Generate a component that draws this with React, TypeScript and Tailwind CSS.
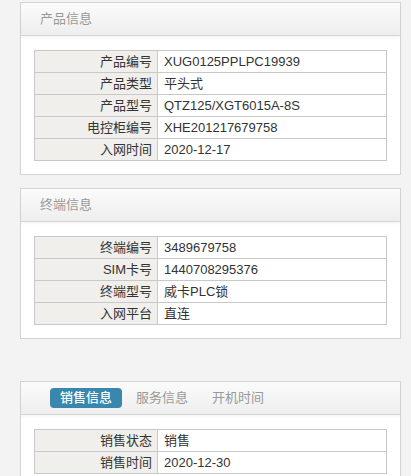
import React from 'react';

type Row = [string, string];

const productRows: Row[] = [
  ['产品编号', 'XUG0125PPLPC19939'],
  ['产品类型', '平头式'],
  ['产品型号', 'QTZ125/XGT6015A-8S'],
  ['电控柜编号', 'XHE201217679758'],
  ['入网时间', '2020-12-17'],
];

const terminalRows: Row[] = [
  ['终端编号', '3489679758'],
  ['SIM卡号', '1440708295376'],
  ['终端型号', '威卡PLC锁'],
  ['入网平台', '直连'],
];

const saleRows: Row[] = [
  ['销售状态', '销售'],
  ['销售时间', '2020-12-30'],
];

function InfoTable({ rows }: { rows: Row[] }) {
  return (
    <table className="w-full border-collapse text-[13px] text-[#333]">
      <tbody>
        {rows.map(([label, value]) => (
          <tr key={label} className="h-[22px]">
            <td className="w-[123px] border border-[#c8c8c8] bg-[#f0efeb] pr-[5px] text-right leading-[20px]">
              {label}
            </td>
            <td className="border border-[#c8c8c8] bg-white pl-[6px] leading-[20px]">{value}</td>
          </tr>
        ))}
      </tbody>
    </table>
  );
}

function Card({ header, rows, className }: { header: React.ReactNode; rows: Row[]; className?: string }) {
  return (
    <div className={`w-[381px] border border-[#d4d4d4] bg-white ${className ?? ''}`}>
      {/* Header */}
      <div className="flex h-[33px] items-center border-b border-[#d4d4d4] bg-gradient-to-b from-[#fbfbfb] to-[#eeeeee] shadow-[0_2px_3px_rgba(0,0,0,0.04)]">
        {header}
      </div>
      {/* Body */}
      <div className="px-[13px] pt-[14px] pb-[13px]">
        <InfoTable rows={rows} />
      </div>
    </div>
  );
}

export default function App() {
  return (
    <div
      className="min-h-screen bg-[#f3f3f3] pt-[2px] pl-[20px]"
      style={{ fontFamily: '"Liberation Sans", "Noto Sans CJK SC", sans-serif' }}
    >
      <Card
        header={<span className="pl-[19px] text-[13px] text-[#999]">产品信息</span>}
        rows={productRows}
      />
      <Card
        className="mt-[13px]"
        header={<span className="pl-[19px] text-[13px] text-[#999]">终端信息</span>}
        rows={terminalRows}
      />
      <Card
        className="mt-[42px]"
        header={
          <div className="flex items-center gap-[4px] pl-[29px] text-[13px]">
            <span className="flex h-[20px] items-center rounded-[4px] bg-[#3a87ad] px-[10px] font-medium text-white">
              销售信息
            </span>
            <span className="px-[10px] text-[#999]">服务信息</span>
            <span className="px-[10px] text-[#999]">开机时间</span>
          </div>
        }
        rows={saleRows}
      />
    </div>
  );
}
